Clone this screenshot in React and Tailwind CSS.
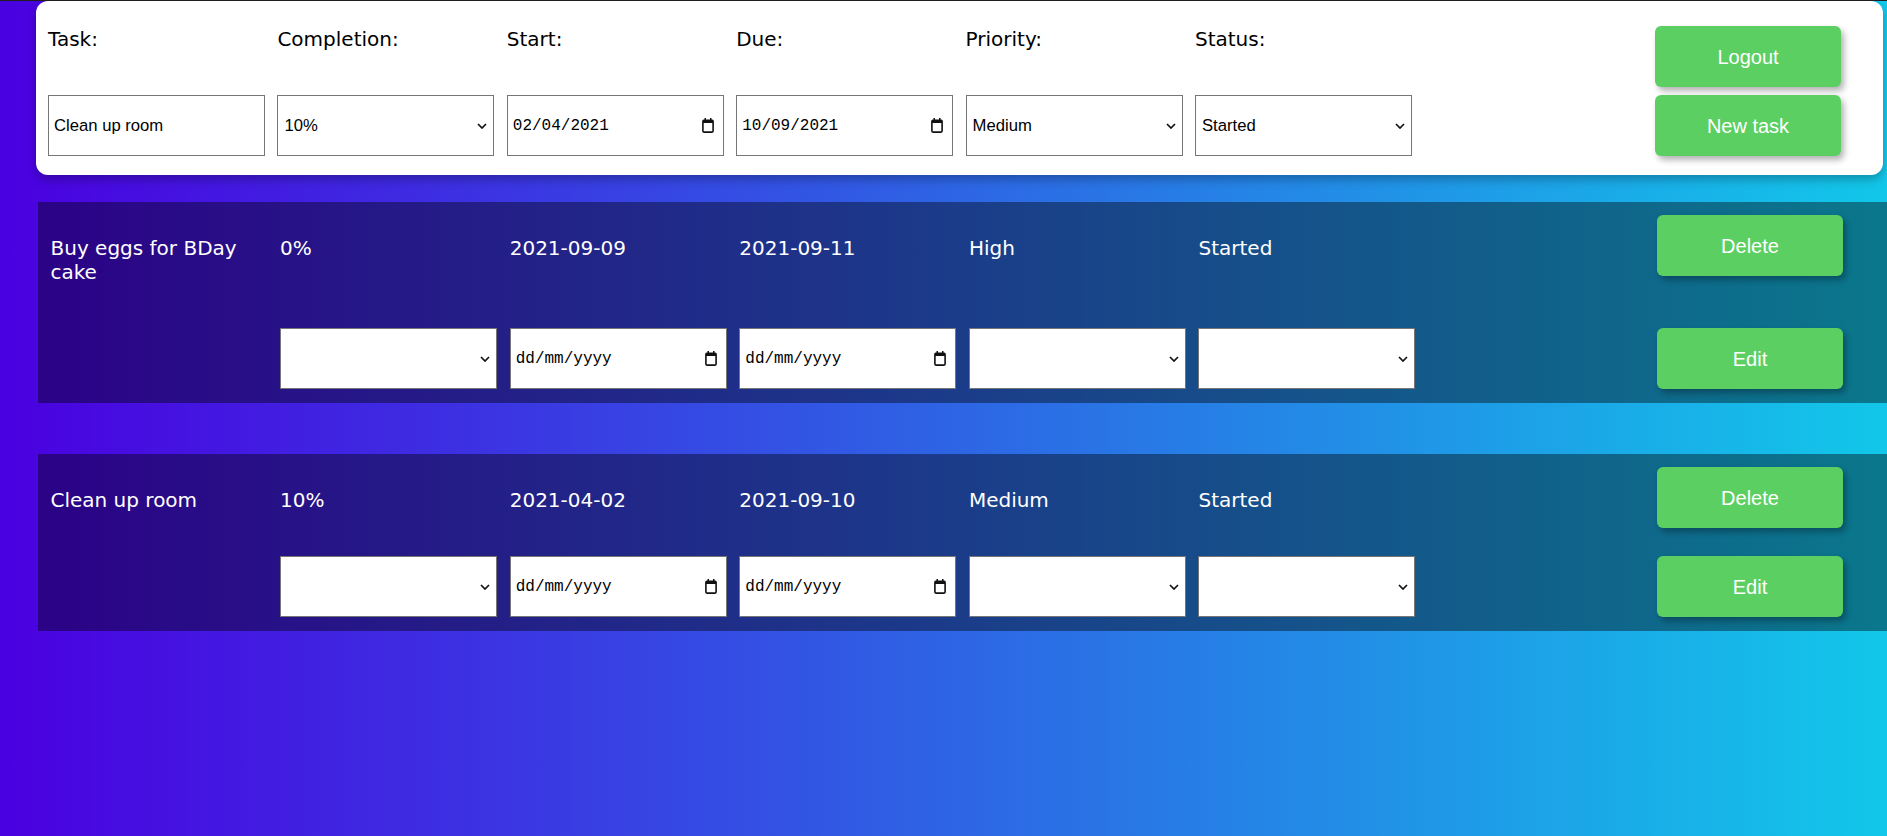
import { useState } from "react";

const tasks = [
  {
    id: 1,
    name: "Buy eggs for BDay cake",
    completion: "0%",
    start: "2021-09-09",
    due: "2021-09-11",
    priority: "High",
    status: "Started",
  },
  {
    id: 2,
    name: "Clean up room",
    completion: "10%",
    start: "2021-04-02",
    due: "2021-09-10",
    priority: "Medium",
    status: "Started",
  },
];

const completionOptions = ["0%", "10%", "20%", "30%", "40%", "50%", "60%", "70%", "80%", "90%", "100%"];
const priorityOptions = ["Low", "Medium", "High"];
const statusOptions = ["Not started", "Started", "Finished"];

// yyyy-mm-dd -> dd/mm/yyyy
const toDisplay = (iso) => {
  if (!iso) return "";
  const [y, m, d] = iso.split("-");
  return `${d}/${m}/${y}`;
};

function Chevron() {
  return (
    <svg width="10" height="6" viewBox="0 0 10 6" className="shrink-0">
      <path d="M1 1l4 4 4-4" stroke="#111" strokeWidth="1.7" fill="none" />
    </svg>
  );
}

function CalendarIcon() {
  return (
    <svg width="12" height="15" viewBox="0 0 12 15" className="shrink-0">
      <rect x="2.5" y="0" width="1.5" height="3" fill="#111" />
      <rect x="8" y="0" width="1.5" height="3" fill="#111" />
      <rect x="0.9" y="2.4" width="10.2" height="11.7" rx="1" stroke="#111" strokeWidth="1.6" fill="none" />
      <rect x="1" y="2.4" width="10" height="2.6" fill="#111" />
    </svg>
  );
}

function SelectBox({ value, onChange, options }) {
  return (
    <div className="flex h-[61px] w-[217px] items-center border border-[#767676] bg-white pr-[6px]">
      <select
        value={value}
        onChange={(e) => onChange(e.target.value)}
        className="h-full min-w-0 flex-1 appearance-none bg-transparent pl-[6px] font-['Liberation_Sans',Arial,sans-serif] text-[16.67px] text-black outline-none"
      >
        <option value=""></option>
        {options.map((o) => (
          <option key={o} value={o}>
            {o}
          </option>
        ))}
      </select>
      <Chevron />
    </div>
  );
}

function DateBox({ value, onChange }) {
  return (
    <div className="flex h-[61px] w-[217px] items-center border border-[#767676] bg-white pl-[5px] pr-[9px]">
      <input
        type="text"
        value={toDisplay(value)}
        onChange={(e) => onChange(e.target.value)}
        placeholder="dd/mm/yyyy"
        className="h-full min-w-0 flex-1 bg-transparent font-['Liberation_Mono',monospace] text-[16px] text-black outline-none placeholder:text-black"
      />
      <CalendarIcon />
    </div>
  );
}

function GreenButton({ children, className = "" }) {
  return (
    <button
      className={`h-[61px] w-[186px] self-start rounded-[6px] bg-[#5ccf62] font-['Liberation_Sans',Arial,sans-serif] text-[20px] text-white shadow-[3px_4px_6px_rgba(0,0,0,0.3)] ${className}`}
    >
      {children}
    </button>
  );
}

function TaskRow({ task, first }) {
  const [completion, setCompletion] = useState("");
  const [start, setStart] = useState("");
  const [due, setDue] = useState("");
  const [priority, setPriority] = useState("");
  const [status, setStatus] = useState("");

  const values = [task.name, task.completion, task.start, task.due, task.priority, task.status];

  return (
    <div className={`ml-[38px] bg-black/40 ${first ? "mt-[27px]" : "mt-[51px]"}`}>
      <div className="grid grid-cols-[repeat(6,229.6px)_1fr_186px] pb-[14px] pl-[12.5px] pr-[44px]">
        {values.map((v, i) => (
          <div
            key={i}
            className="w-[217px] pb-[44px] pt-[34px] font-['DejaVu_Sans',Verdana,sans-serif] text-[20px] leading-[24px] text-white"
          >
            {v}
          </div>
        ))}
        <div />
        <GreenButton className="mt-[13px]">Delete</GreenButton>

        <div />
        <SelectBox value={completion} onChange={setCompletion} options={completionOptions} />
        <DateBox value={start} onChange={setStart} />
        <DateBox value={due} onChange={setDue} />
        <SelectBox value={priority} onChange={setPriority} options={priorityOptions} />
        <SelectBox value={status} onChange={setStatus} options={statusOptions} />
        <div />
        <GreenButton>Edit</GreenButton>
      </div>
    </div>
  );
}

export default function App() {
  const [name, setName] = useState("Clean up room");
  const [completion, setCompletion] = useState("10%");
  const [start, setStart] = useState("2021-04-02");
  const [due, setDue] = useState("2021-09-10");
  const [priority, setPriority] = useState("Medium");
  const [status, setStatus] = useState("Started");

  const labels = ["Task:", "Completion:", "Start:", "Due:", "Priority:", "Status:"];

  return (
    <div className="min-h-screen bg-[linear-gradient(to_right,#4a00e0,#12c7e9)] pb-10">
      <div className="h-px bg-[#1f1f1f]" />

      {/* New task form */}
      <div className="ml-[36px] mr-[4px] rounded-[12px] bg-white shadow-[0_5px_10px_rgba(0,0,0,0.25)]">
        <div className="grid grid-cols-[repeat(6,229.4px)_1fr_186px] pb-[19px] pl-[12px] pr-[42px]">
          {labels.map((l) => (
            <div
              key={l}
              className="w-[217px] pb-[44px] pt-[26px] font-['DejaVu_Sans',Verdana,sans-serif] text-[20px] leading-[24px] text-black"
            >
              {l}
            </div>
          ))}
          <div />
          <GreenButton className="mt-[25px]">Logout</GreenButton>

          <input
            type="text"
            value={name}
            onChange={(e) => setName(e.target.value)}
            className="h-[61px] w-[217px] border border-[#767676] bg-white px-[5px] font-['Liberation_Sans',Arial,sans-serif] text-[16.67px] text-black outline-none"
          />
          <SelectBox value={completion} onChange={setCompletion} options={completionOptions} />
          <DateBox value={start} onChange={setStart} />
          <DateBox value={due} onChange={setDue} />
          <SelectBox value={priority} onChange={setPriority} options={priorityOptions} />
          <SelectBox value={status} onChange={setStatus} options={statusOptions} />
          <div />
          <GreenButton>New task</GreenButton>
        </div>
      </div>

      {tasks.map((t, i) => (
        <TaskRow key={t.id} task={t} first={i === 0} />
      ))}
    </div>
  );
}
